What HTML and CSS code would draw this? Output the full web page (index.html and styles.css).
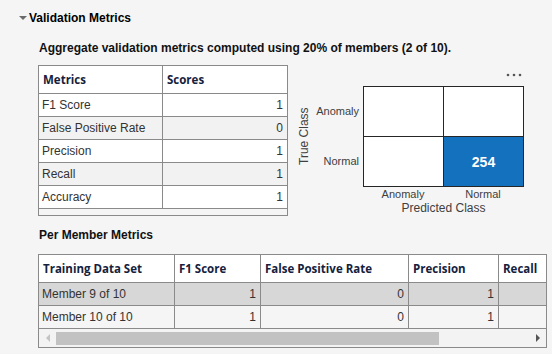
FILE: index.html
```html
<!DOCTYPE html>
<html>
<head>
<meta charset="utf-8">
<link rel="stylesheet" href="styles.css">
</head>
<body>
<div class="page">
  <div class="section-header">
    <span class="caret"></span>
    <span class="title">Validation Metrics</span>
  </div>
  <div class="content">
    <p class="desc">Aggregate validation metrics computed using 20% of members (2 of 10).</p>
    <div class="top-row">
      <div class="tbl1-wrap">
        <table class="tbl tbl1">
          <colgroup><col class="c1"><col class="c2"></colgroup>
          <thead><tr><th class="sep">Metrics</th><th>Scores</th></tr></thead>
          <tbody>
            <tr class="odd"><td class="sep">F1 Score</td><td class="num">1</td></tr>
            <tr class="even"><td class="sep">False Positive Rate</td><td class="num">0</td></tr>
            <tr class="odd"><td class="sep">Precision</td><td class="num">1</td></tr>
            <tr class="even"><td class="sep">Recall</td><td class="num">1</td></tr>
            <tr class="odd"><td class="sep">Accuracy</td><td class="num">1</td></tr>
          </tbody>
        </table>
        <div class="tbl1-fill"></div>
      </div>
      <div class="chart">
        <svg class="more" width="16" height="4" viewBox="0 0 16 4"><circle cx="2" cy="2" r="1.3"/><circle cx="8" cy="2" r="1.3"/><circle cx="14" cy="2" r="1.3"/></svg>
        <div class="chart-grid">
          <div class="ylabel">True Class</div>
          <div class="yticks"><span>Anomaly</span><span>Normal</span></div>
          <div class="matrix">
            <div class="cell"></div>
            <div class="cell"></div>
            <div class="cell"></div>
            <div class="cell hit">254</div>
          </div>
          <div class="xticks"><span>Anomaly</span><span>Normal</span></div>
          <div class="xlabel">Predicted Class</div>
        </div>
      </div>
    </div>
    <h3 class="sub">Per Member Metrics</h3>
    <div class="tbl2-wrap">
      <div class="tbl2-clip">
        <table class="tbl tbl2">
          <colgroup><col class="d1"><col class="d2"><col class="d3"><col class="d4"><col class="d5"></colgroup>
          <thead><tr><th class="sep">Training Data Set</th><th class="sep">F1 Score</th><th class="sep">False Positive Rate</th><th class="sep">Precision</th><th>Recall</th></tr></thead>
          <tbody>
            <tr class="sel"><td class="sep">Member 9 of 10</td><td class="sep num">1</td><td class="sep num">0</td><td class="sep num">1</td><td class="num"></td></tr>
            <tr class="even2"><td class="sep">Member 10 of 10</td><td class="sep num">1</td><td class="sep num">0</td><td class="sep num">1</td><td class="num"></td></tr>
          </tbody>
        </table>
      </div>
      <div class="hscroll">
        <span class="arrow-left"></span>
        <span class="thumb"></span>
        <span class="spacer"></span>
        <span class="arrow-right"></span>
      </div>
    </div>
  </div>
</div>
</body>
</html>
```
FILE: styles.css
```css
* { box-sizing: border-box; }
html, body { margin: 0; padding: 0; }
body {
  background: #f5f5f5;
  font-family: "Liberation Sans", Arial, sans-serif;
  color: #333;
  width: 552px;
  height: 354px;
  overflow: hidden;
}
.page { padding-top: 10px; }
.section-header {
  display: flex;
  align-items: center;
  height: 16px;
  padding-left: 19px;
}
.caret {
  width: 0; height: 0;
  border-left: 4px solid transparent;
  border-right: 4px solid transparent;
  border-top: 4px solid #6b6b6b;
  margin-right: 2px;
}
.title { font-weight: bold; font-size: 12px; color: #000; }
.content { padding-left: 38px; }
.desc {
  margin: 15px 0 0 1px;
  font-size: 12px;
  line-height: 14px;
  font-weight: bold;
  color: #111;
}
.top-row { display: flex; margin-top: 10px; }
.tbl1-wrap {
  width: 250px;
  border: 1px solid #8a8a8a;
  background: #f5f5f5;
}
.tbl { border-collapse: separate; border-spacing: 0; table-layout: fixed; }
.tbl th {
  font-family: "Open Sans", "Liberation Sans", sans-serif;
  font-weight: 700;
  font-size: 11.5px;
  color: #14213d;
  text-align: left;
  background: #fff;
  padding: 0 0 0 4px;
  border-bottom: 1px solid #8a8a8a;
  white-space: nowrap;
  overflow: hidden;
}
.tbl td {
  font-size: 12px;
  padding: 0 4px 0 3px;
  border-bottom: 1px solid #8a8a8a;
  white-space: nowrap;
  overflow: hidden;
  color: #333;
}
.tbl .sep { border-right: 1px solid #8a8a8a; }
.tbl .num { text-align: right; }
.tbl1 { width: 248px; }
.tbl1 .c1 { width: 124px; }
.tbl1 .c2 { width: 124px; }
.tbl1 th { height: 28px; line-height: 27px; }
.tbl1 td { height: 23px; line-height: 22px; }
.tbl1 .odd td { background: #fff; }
.tbl1 .even td { background: #f2f2f2; }
.tbl1-fill { height: 6px; }

.chart {
  position: relative;
  width: 264px;
}
.more {
  position: absolute;
  top: 8px;
  left: 218px;
  fill: #555;
}
.chart-grid {
  display: grid;
  grid-template-columns: 14px 52px 161px;
  grid-template-rows: 101px 15px 12px;
  margin: 21px 0 0 9px;
  color: #404040;
}
.ylabel {
  grid-row: 1; grid-column: 1;
  writing-mode: vertical-rl;
  transform: rotate(180deg);
  font-size: 12px;
  text-align: center;
  line-height: 14px;
}
.yticks {
  grid-row: 1; grid-column: 2;
  display: flex;
  flex-direction: column;
}
.yticks span {
  height: 50px;
  line-height: 50px;
  text-align: right;
  padding-right: 4px;
  font-size: 11px;
}
.matrix {
  grid-row: 1; grid-column: 3;
  display: grid;
  grid-template-columns: 79px 79px;
  grid-template-rows: 49px 49px;
  gap: 1px;
  padding: 1px;
  background: #262626;
}
.cell { background: #fff; }
.cell.hit {
  background: #1371bd;
  color: #fff;
  font-weight: bold;
  font-size: 14px;
  display: flex;
  align-items: center;
  justify-content: center;
}
.xticks {
  grid-row: 2; grid-column: 3;
  display: grid;
  grid-template-columns: 80px 80px;
  font-size: 11px;
  line-height: 15px;
  text-align: center;
}
.xlabel {
  grid-row: 3; grid-column: 3;
  font-size: 12px;
  line-height: 12px;
  text-align: center;
}

.sub {
  margin: 12px 0 0 1px;
  font-size: 12px;
  line-height: 14px;
  font-weight: bold;
  color: #111;
}
.tbl2-wrap {
  margin-top: 12px;
  width: 509px;
  border: 1px solid #8a8a8a;
  background: #f5f5f5;
}
.tbl2-clip { overflow: hidden; }
.tbl2 { width: 550px; }
.tbl2 .d1 { width: 136px; }
.tbl2 .d2 { width: 86px; }
.tbl2 .d3 { width: 148px; }
.tbl2 .d4 { width: 90px; }
.tbl2 .d5 { width: 90px; }
.tbl2 th { height: 28px; line-height: 27px; }
.tbl2 td { height: 23px; line-height: 22px; }
.tbl2 .sel td { background: #d7d7d7; }
.tbl2 .even2 td { background: #f5f5f5; }
.hscroll {
  display: flex;
  align-items: flex-start;
  height: 18px;
  background: #f3f3f3;
}
.arrow-left {
  width: 0; height: 0;
  margin: 5px 0 0 7px;
  border-top: 4px solid transparent;
  border-bottom: 4px solid transparent;
  border-right: 4px solid #c4c4c4;
}
.thumb {
  width: 383px;
  height: 13px;
  margin: 3px 0 0 6px;
  background: #c2c2c2;
}
.spacer { flex: 1; }
.arrow-right {
  width: 0; height: 0;
  margin: 5px 6px 0 0;
  border-top: 4px solid transparent;
  border-bottom: 4px solid transparent;
  border-left: 4px solid #555;
}
```
